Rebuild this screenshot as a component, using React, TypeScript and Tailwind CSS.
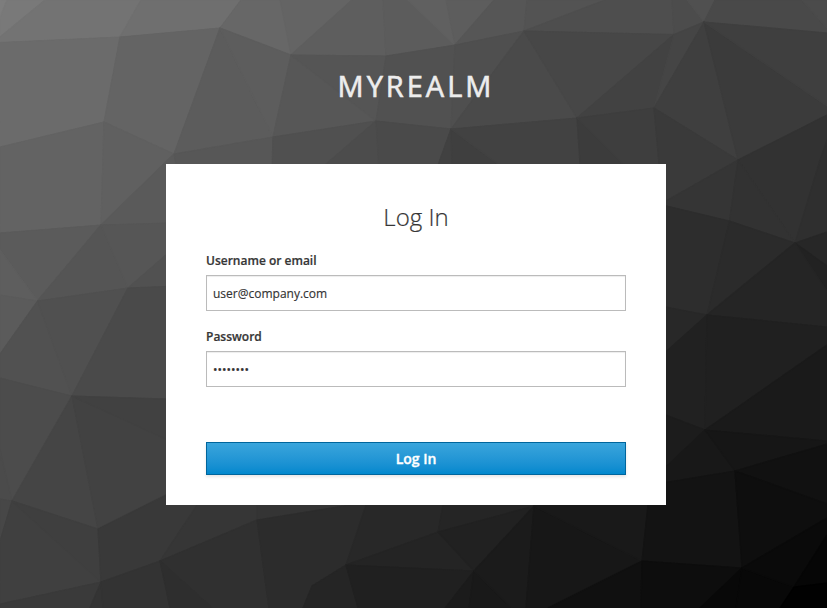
type Facet = [fill: string, points: string];

// Low-poly backdrop, listed from the top left to the bottom right.
const facets: Facet[] = [
  ['#7d7d7d', '0,0 7,0 0,18'],
  ['#797979', '7,0 45,0 0,37 0,18'],
  ['#737373', '45,0 141,0 120,37 0,42.5 0,37'],
  ['#6f6f6f', '141,0 241,0 220,28 120,37'],
  ['#676767', '241,0 280,0 291,55 220,28'],
  ['#646464', '280,0 352,0 291,55'],
  ['#5e5e5e', '352,0 383,0 386,56 291,55'],
  ['#5c5c5c', '383,0 408,0 455,45 386,56'],
  ['#606060', '408,0 446,0 455,45'],
  ['#5d5d5d', '446,0 494,0 455,45'],
  ['#565656', '494,0 527,0 524,31 455,45'],
  ['#535353', '527,0 605,0 524,31'],
  ['#4e4e4e', '605,0 672,0 674,34.5 524,31'],
  ['#4c4c4c', '672,0 687,0 704,22 674,34.5'],
  ['#505050', '687,0 715,0 704,22'],
  ['#494949', '715,0 802,0 827,28 827,33 704,22'],
  ['#4b4b4b', '802,0 827,0 827,28'],
  ['#6b6b6b', '0,42.5 120,37 104,122 0,147'],
  ['#646464', '120,37 220,28 174,154 104,122'],
  ['#5c5c5c', '220,28 273,137 174,154'],
  ['#5d5d5d', '220,28 291,55 273,137'],
  ['#575757', '291,55 376,121 273,137'],
  ['#555555', '291,55 386,56 376,121'],
  ['#515151', '386,56 455,45 451,129 376,121'],
  ['#4f4f4f', '455,45 524,31 451,129'],
  ['#4a4a4a', '524,31 577,118 451,129'],
  ['#474747', '524,31 674,34.5 577,118'],
  ['#424242', '674,34.5 654,108 577,118'],
  ['#454545', '674,34.5 704,22 654,108'],
  ['#3f3f3f', '704,22 738,160 654,108'],
  ['#3b3b3b', '704,22 827,106 827,115 738,160'],
  ['#3f3f3f', '704,22 827,33 827,106'],
  ['#636363', '0,147 104,122 101,225 0,233'],
  ['#606060', '104,122 174,154 101,225'],
  ['#5a5a5a', '174,154 180,164 200,223 101,225'],
  ['#575757', '174,154 273,137 270,240 190,240'],
  ['#505050', '273,137 376,121 325,165 270,240'],
  ['#4c4c4c', '376,121 383,165 325,240 325,165'],
  ['#4a4a4a', '376,121 451,129 438,165 383,240'],
  ['#414141', '451,129 454,165 454,240 438,165'],
  ['#3f3f3f', '451,129 498,164 550,200 454,240'],
  ['#424242', '451,129 577,118 580,164 550,200 498,164'],
  ['#3c3c3c', '577,118 622,164 680,220 580,164'],
  ['#3e3e3e', '577,118 654,108 659,164 680,220'],
  ['#3a3a3a', '654,108 738,160 666,201 659,164'],
  ['#323232', '738,160 827,115 827,232 795,243'],
  ['#2f2f2f', '827,140 827,232 795,243 820,160'],
  ['#353535', '738,160 729.5,221 666,206 666,201'],
  ['#323232', '738,160 795,243 729.5,221'],
  ['#5b5b5b', '0,233 101,225 37.5,301 0,250'],
  ['#5e5e5e', '0,250 37.5,301 0,295'],
  ['#5b5b5b', '0,295 37.5,301 0,354'],
  ['#555555', '101,225 128,288 37.5,301'],
  ['#565656', '101,225 200,222 166,255 128,288'],
  ['#515151', '166,255 200,222 200,285 128,288'],
  ['#515151', '0,354 37.5,301 72,396 0,378'],
  ['#505050', '37.5,301 128,288 72,396'],
  ['#4a4a4a', '128,288 200,285 200,400 72,396'],
  ['#4c4c4c', '0,378 72,396 12,501 0,499'],
  ['#4b4b4b', '0,450 12,501 0,499'],
  ['#454545', '72,396 98,529 12,501'],
  ['#424242', '72,396 166,438 200,478 98,529'],
  ['#414141', '72,396 200,400 200,455'],
  ['#474747', '0,499 12,501 0,541'],
  ['#404040', '0,541 12,501 101,582 0,604'],
  ['#3f3f3f', '12,501 98,529 101,582'],
  ['#393939', '98,529 200,478 197,505 160,561 101,582'],
  ['#3a3a3a', '0,604 101,582 90,608 0,608'],
  ['#343434', '101,582 103,608 90,608'],
  ['#333333', '101,582 160,561 170,608 103,608'],
  ['#363636', '197,505 257,490 257,520 160,561'],
  ['#343434', '257,490 360,490 350,505 257,520'],
  ['#303030', '160,561 257,520 269,608 212,608'],
  ['#2e2e2e', '160,561 212,608 170,608'],
  ['#2c2c2c', '257,520 350,505 372,490 346,565 312,586 303,608 269,608'],
  ['#282828', '366,505 372,490 448,490 438,532 346,565'],
  ['#252525', '443,505 448,490 534,490 534,506 438,532'],
  ['#252525', '346,565 358,608 303,608 312,586'],
  ['#242424', '346,565 438,532 474,571'],
  ['#202020', '346,565 474,571 445,608 358,608'],
  ['#212121', '438,532 534,506 474,571'],
  ['#1b1b1b', '474,571 469,608 445,608'],
  ['#191919', '474,571 512,608 469,608'],
  ['#1b1b1b', '474,571 534,506 526,608 512,608'],
  ['#171717', '534,506 642,561 548,608 526,608'],
  ['#191919', '534,490 650,490 642,561 534,506'],
  ['#101010', '642,561 641,608 548,608'],
  ['#2d2d2d', '650,202 729.5,221 707,315 650,304'],
  ['#2b2b2b', '729.5,221 795,243 707,315'],
  ['#272727', '795,243 827,232 827,266'],
  ['#222222', '795,243 827,266 827,291'],
  ['#252525', '795,243 827,291 827,327 707,315'],
  ['#282828', '650,304 707,315 650,366'],
  ['#212121', '650,366 707,315 705,430 650,409'],
  ['#202020', '707,315 827,327 827,345 705,430'],
  ['#1a1a1a', '827,345 827,441 705,430'],
  ['#1c1c1c', '650,409 705,430 650,482'],
  ['#181818', '650,482 705,430 735,471 650,485'],
  ['#161616', '705,430 827,441 827,444 735,471'],
  ['#131313', '650,485 735,471 742,568 642,561'],
  ['#111111', '735,471 827,444 827,504'],
  ['#0e0e0e', '735,471 827,504 827,518 742,568'],
  ['#0d0d0d', '642,561 742,568 700,608 641,608'],
  ['#080808', '742,568 736,608 700,608'],
  ['#080808', '742,568 794,587 780,608 736,608'],
  ['#0a0a0a', '742,568 827,518 827,535 794,587'],
  ['#060606', '794,587 827,535 827,583'],
  ['#010101', '794,587 827,583 827,608 780,608'],
];

function Backdrop() {
  return (
    <svg
      className="col-start-1 row-start-1 h-[608px] w-[827px]"
      viewBox="0 0 827 608"
      aria-hidden="true"
    >
      {facets.map(([fill, points]) => (
        <polygon
          key={points}
          points={points}
          fill={fill}
          stroke={fill}
          strokeWidth="1.2"
          strokeLinejoin="round"
        />
      ))}
    </svg>
  );
}

type FieldProps = { id: string; label: string; type: string; value: string };

function Field({ id, label, type, value }: FieldProps) {
  return (
    <div className="flex flex-col">
      <label
        htmlFor={id}
        className="mb-[5px] pt-px text-[12px] leading-[18px] font-semibold [-webkit-text-stroke:0.2px_#363636]"
      >
        {label}
      </label>
      <input
        id={id}
        type={type}
        defaultValue={value}
        className="h-9 w-full border border-[#bbb] bg-white px-1.5 text-[12px] leading-5 text-[#333] shadow-[inset_0_1px_1px_rgba(3,3,3,0.075)] outline-none [-webkit-text-stroke:0.15px_#333]"
      />
    </div>
  );
}

export default function App() {
  return (
    <div className="grid h-[608px] w-[827px] overflow-hidden bg-[#333] font-['Open_Sans','Noto_Sans',sans-serif] text-[#363636]">
      <Backdrop />
      <main className="z-10 col-start-1 row-start-1 flex flex-col items-center pl-[5px]">
        <h1 className="mt-[62px] h-[102px] pt-[2px] text-[29px] leading-[44px] tracking-[3px] text-[#ededed] uppercase [-webkit-text-stroke:0.6px_#ededed]">
          myrealm
        </h1>
        <section className="h-[341px] w-[500px] bg-white px-10 pt-[37px]">
          <h2 className="text-center text-[24px] leading-8 font-light [-webkit-text-stroke:0.2px_#363636]">
            Log In
          </h2>
          <form className="mt-[18px] flex flex-col gap-4" onSubmit={(e) => e.preventDefault()}>
            <Field id="username" label="Username or email" type="text" value="user@company.com" />
            <Field id="password" label="Password" type="password" value="password" />
            <button
              type="submit"
              className="mt-[39px] h-[33px] border border-[#00659c] bg-linear-to-b from-[#39a5dc] to-[#0088ce] text-[14px] leading-[18px] font-semibold text-white shadow-[0_2px_3px_rgba(3,3,3,0.1)] [-webkit-text-stroke:0.35px_#fff]"
            >
              Log In
            </button>
          </form>
        </section>
      </main>
    </div>
  );
}
